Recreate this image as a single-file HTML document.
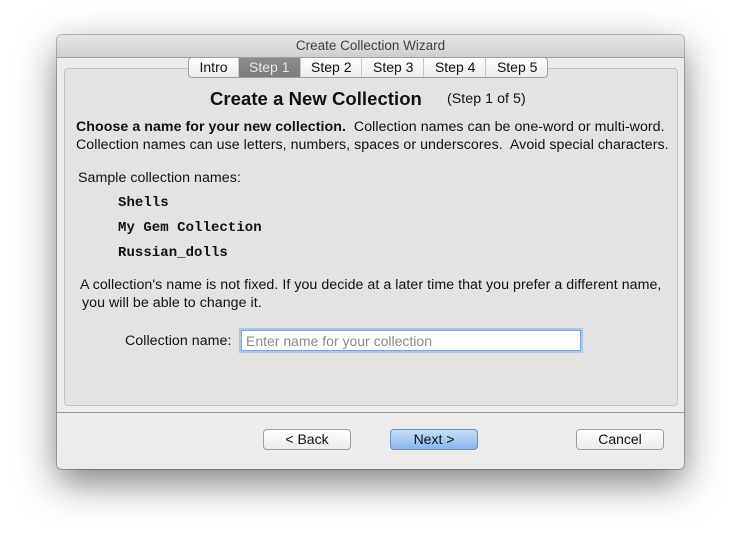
<!DOCTYPE html>
<html><head><style>
body{margin:0;width:741px;height:549px;background:#fff;position:relative;font-family:"Liberation Sans",sans-serif;overflow:hidden}
.win{position:absolute;left:57px;top:35px;width:627px;height:434px;background:#ececec;border-radius:5px;box-shadow:0 14px 38px rgba(0,0,0,.5),0 0 0 1px rgba(0,0,0,.25)}
.title{position:absolute;left:0;top:0;width:627px;height:22px;background:linear-gradient(#e6e6e6,#cfcfcf);border-bottom:1px solid #a0a0a0;border-radius:5px 5px 0 0;text-align:center;font-size:13.5px;line-height:22px;color:#404040}
.box{position:absolute;left:7px;top:33px;width:612px;height:336px;background:#e3e3e3;border:1px solid #c4c4c4;border-radius:4px}
.tabs{position:absolute;left:131px;top:22px;height:19px;display:flex;border:1px solid #a0a0a0;border-radius:4px;background:linear-gradient(#fff,#ececec);overflow:hidden}
.tabs div{font-size:14px;line-height:19px;padding:0 10px 0 10.5px;border-left:1px solid #c8c8c8;color:#111}
.tabs div:first-child{border-left:none}
.tabs .sel{background:linear-gradient(#8d8d8d,#7c7c7c);color:#e8e8e8}
.t{position:absolute;font-size:14.2px;color:#111;white-space:nowrap;letter-spacing:.05px}
.mono{font-family:"Liberation Mono",monospace;font-weight:bold;font-size:14px}
.sep{position:absolute;left:0;top:377px;width:627px;border-top:1px solid #9a9a9a}
.btn{position:absolute;top:394px;width:86px;height:19px;border:1px solid #9c9c9c;border-radius:4px;background:linear-gradient(#fff,#ececec);text-align:center;font-size:14px;line-height:19px;color:#111}
.next{background:linear-gradient(#c7def7,#86b6ee);border-color:#6a8fc0}
.input{position:absolute;left:184px;top:295px;height:21px;background:#fff;border:1px solid #7aa5d6;box-shadow:0 0 0 2px #a9c8ec;font-size:14px;line-height:21px;color:#8a8a8a;padding-left:4px;box-sizing:border-box;width:340px}
</style></head><body>
<div class="win">
<div class="title">Create Collection Wizard</div>
<div class="box"></div>
<div class="tabs"><div>Intro</div><div class="sel">Step 1</div><div>Step 2</div><div>Step 3</div><div>Step 4</div><div>Step 5</div></div>
<div class="t" style="left:153px;top:53px;font-size:18.5px;font-weight:bold">Create a New Collection</div>
<div class="t" style="left:390px;top:56px">(Step 1 of 5)</div>
<div class="t" style="left:19px;top:84px"><b>Choose a name for your new collection.</b>&nbsp; Collection names can be one-word or multi-word.</div>
<div class="t" style="left:19px;top:102px">Collection names can use letters, numbers, spaces or underscores.&nbsp; Avoid special characters.</div>
<div class="t" style="left:21px;top:135px">Sample collection names:</div>
<div class="t mono" style="left:61px;top:160px">Shells</div>
<div class="t mono" style="left:61px;top:185px">My Gem Collection</div>
<div class="t mono" style="left:61px;top:210px">Russian_dolls</div>
<div class="t" style="left:23px;top:242px">A collection's name is not fixed. If you decide at a later time that you prefer a different name,</div>
<div class="t" style="left:25px;top:260px">you will be able to change it.</div>
<div class="t" style="left:68px;top:298px">Collection name:</div>
<div class="input">Enter name for your collection</div>
<div class="sep"></div>
<div class="btn" style="left:206px">&lt; Back</div>
<div class="btn next" style="left:333px">Next &gt;</div>
<div class="btn" style="left:519px">Cancel</div>
</div>
</body></html>
